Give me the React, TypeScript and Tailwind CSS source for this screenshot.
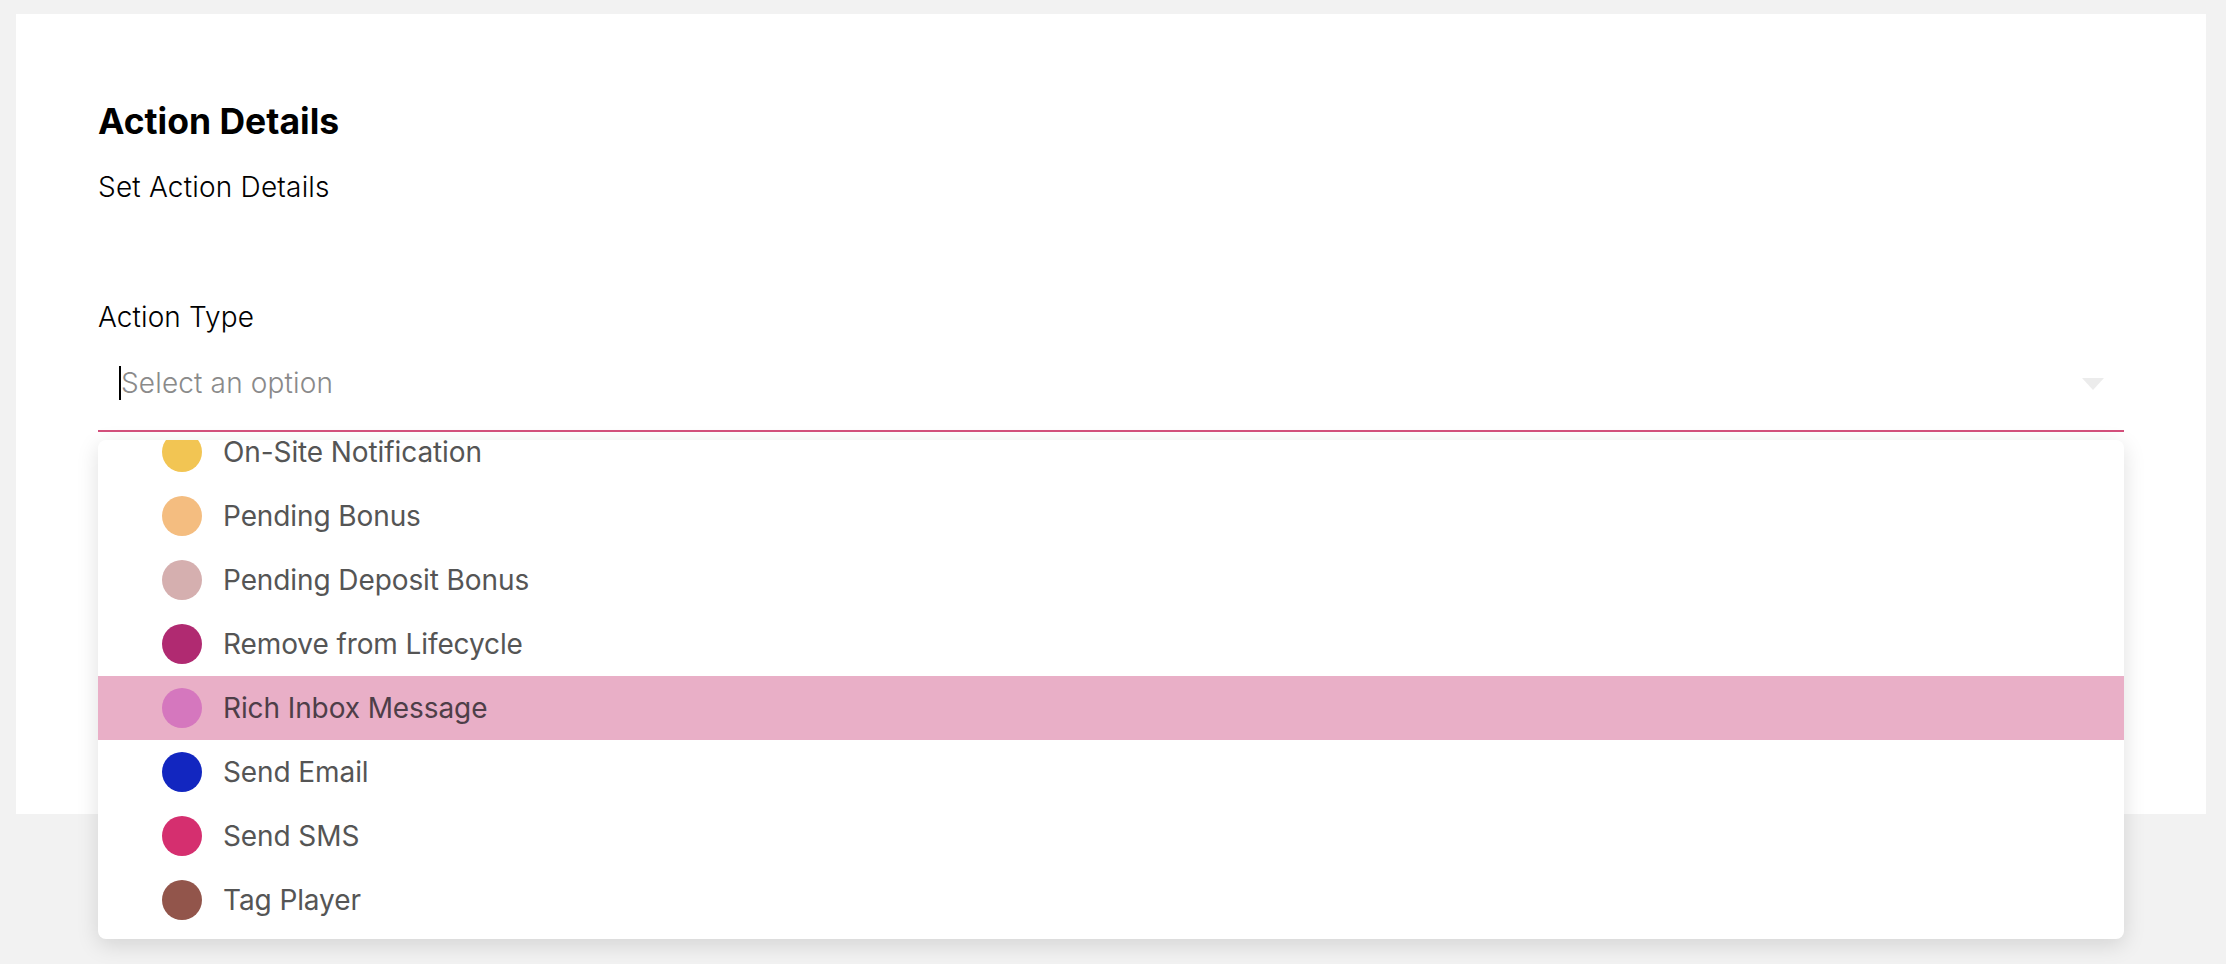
import React from 'react';

const options = [
  { label: 'On-Site Notification', color: '#f2c553' },
  { label: 'Pending Bonus', color: '#f4bd80' },
  { label: 'Pending Deposit Bonus', color: '#d5afaf' },
  { label: 'Remove from Lifecycle', color: '#b02a71' },
  { label: 'Rich Inbox Message', color: '#d577be', active: true },
  { label: 'Send Email', color: '#1226c0' },
  { label: 'Send SMS', color: '#d52f6f' },
  { label: 'Tag Player', color: '#92554b' },
];

const App: React.FC = () => {
  return (
    <div className="min-h-[964px] w-full bg-[#f2f2f2] pt-[14px] pl-[16px] pr-[20px] font-['Inter',sans-serif]">
      <div className="h-[800px] bg-white px-[82px] pt-[88px]">
        {/* Header */}
        <h1 className="text-[35.5px] leading-[40px] font-bold text-black">Action Details</h1>
        <p className="mt-[29px] text-[28px] leading-[32px] font-light tracking-[0.2px] text-black">Set Action Details</p>

        {/* Action Type select */}
        <div className="mt-[98px]">
          <label className="block text-[28px] leading-[32px] font-light tracking-[0.1px] text-black">Action Type</label>
          <div className="relative mt-[2px]">
            <div className="h-[97px] border-b-2 border-[#d4507c] flex items-center pl-[21px] pr-[20px]">
              <span className="w-[2px] h-[34px] bg-black" />
              <span className="flex-1 text-[28px] leading-[32px] font-light tracking-[0.15px] text-[#8a8a8a]">Select an option</span>
              <svg width="22" height="12" viewBox="0 0 22 12" className="mt-[2px]">
                <polygon points="0,0 22,0 11,12" fill="#ececec" />
              </svg>
            </div>

            {/* Dropdown menu */}
            <div className="absolute left-0 right-0 top-full mt-[8px] bg-white rounded-[8px] overflow-hidden shadow-[0_6px_22px_rgba(0,0,0,0.13)] pb-[7px]">
              <div className="-mt-[20px]">
                {options.map((opt) => (
                  <div
                    key={opt.label}
                    className={`h-16 flex items-center pl-16 gap-[21px] ${opt.active ? 'bg-[#e9afc7]' : ''}`}
                  >
                    <span className="w-10 h-10 rounded-full shrink-0" style={{ backgroundColor: opt.color }} />
                    <span className={`text-[28px] leading-[32px] tracking-[-0.1px] ${opt.active ? 'text-[#4e3e48]' : 'text-[#555555]'}`}>
                      {opt.label}
                    </span>
                  </div>
                ))}
              </div>
            </div>
          </div>
        </div>
      </div>
    </div>
  );
};

export default App;
